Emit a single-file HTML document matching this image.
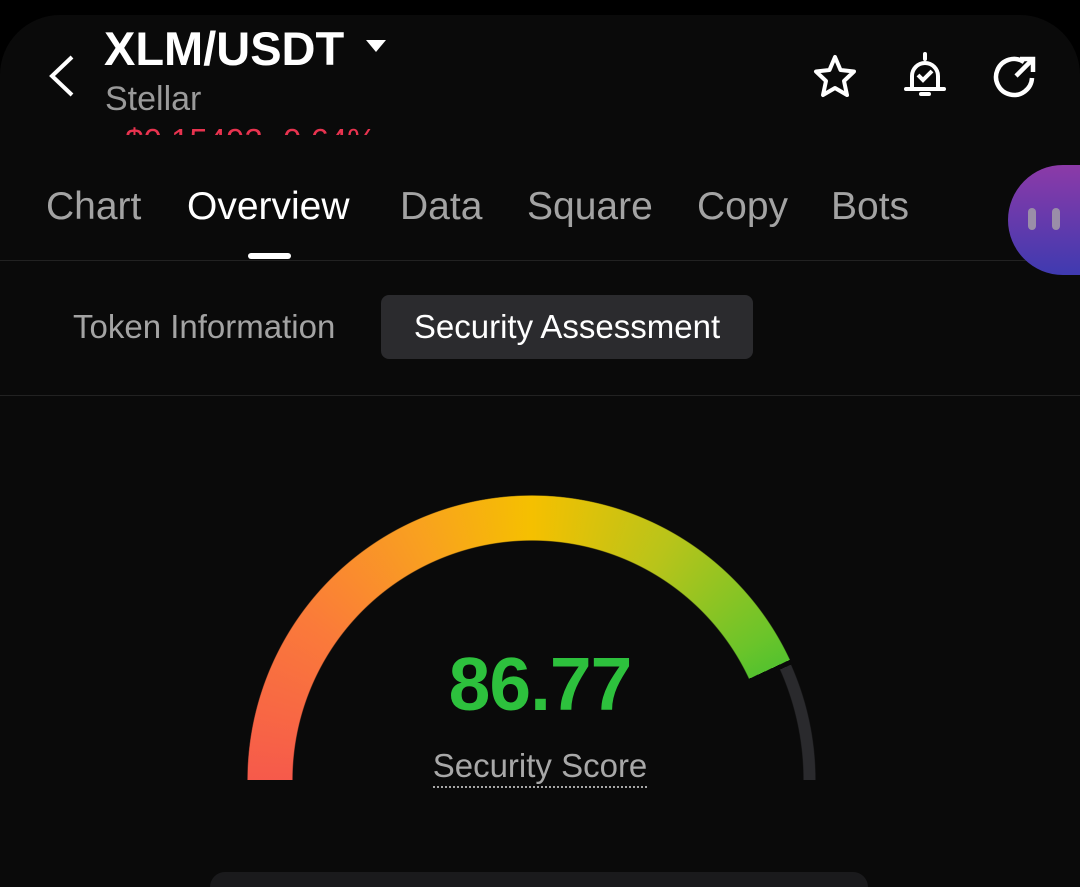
<!DOCTYPE html>
<html><head><meta charset="utf-8"><style>
*{margin:0;padding:0;box-sizing:border-box}
html,body{width:1080px;height:887px;overflow:hidden}
body{background:#000;font-family:"Liberation Sans",sans-serif;position:relative}
.panel{position:absolute;left:0;top:15px;width:1080px;height:872px;background:#0a0a0a;border-radius:60px 60px 0 0}
.abs{position:absolute;white-space:nowrap}
.tab{position:absolute;top:185px;font-size:39px;color:#a3a3a3}
.clip{position:absolute;left:247px;top:495px;width:570px;height:290px;overflow:hidden}
.gauge{position:absolute;left:0;top:0;width:570px;height:570px;border-radius:50%;
background:conic-gradient(from -90deg,#f65a4b 0deg,#fa7a3a 35deg,#f9a020 65deg,#f5c000 90deg,#b8c41a 120deg,#6cc42a 148deg,#55c22e 155deg,transparent 155deg);
-webkit-mask:radial-gradient(circle,transparent 239px,#000 240px,#000 284px,transparent 285px);}
.track{position:absolute;left:0;top:0;width:570px;height:570px;border-radius:50%;
background:conic-gradient(from 66deg,#2a2a2d 0deg,#2a2a2d 24deg,transparent 24deg);
-webkit-mask:radial-gradient(circle,transparent 271px,#000 272px,#000 283px,transparent 284px);}
</style></head><body>
<div class="panel"></div>
<svg class="abs" style="left:46px;top:54px" width="30" height="44"><path d="M26 3 L6 22 L26 41" fill="none" stroke="#fff" stroke-width="4"/></svg>
<div class="abs" style="left:104px;top:21px;font-size:47px;font-weight:bold;color:#fff">XLM/USDT</div>
<svg class="abs" style="left:366px;top:40px" width="20" height="14"><path d="M0 0H20L10 12Z" fill="#fff"/></svg>
<div class="abs" style="left:105px;top:80px;font-size:34px;color:#9a9a9a">Stellar</div>
<div class="abs" style="left:105px;top:118px;height:17px;overflow:hidden;"><div style="font-size:33px;color:#e8334f;margin-top:4px">- $0.15493 -0.64%</div></div>
<svg class="abs" style="left:810px;top:52px" width="50" height="50" viewBox="0 0 50 50"><path d="M25 5 L30.5 18 L44 19.5 L34 29 L37 43 L25 36 L13 43 L16 29 L6 19.5 L19.5 18 Z" fill="none" stroke="#fff" stroke-width="4" stroke-linejoin="round"/></svg>
<svg class="abs" style="left:900px;top:50px" width="50" height="50" viewBox="0 0 50 50"><path d="M12 38 V26 a13 13 0 0 1 26 0 V38 M6 39 H44 M21 44 h8 M25 4 v5" fill="none" stroke="#fff" stroke-width="4" stroke-linecap="round"/><path d="M18 25 l5 5 l9 -9" fill="none" stroke="#fff" stroke-width="4"/></svg>
<svg class="abs" style="left:990px;top:52px" width="50" height="50" viewBox="0 0 50 50"><path d="M34 10 A18 18 0 1 0 42 26" fill="none" stroke="#fff" stroke-width="4.5"/><path d="M26 24 L42 8 M30 7 H43 V20" fill="none" stroke="#fff" stroke-width="4.5"/></svg>
<div class="tab" style="left:46px">Chart</div>
<div class="tab" style="left:187px;color:#fff">Overview</div>
<div class="tab" style="left:400px">Data</div>
<div class="tab" style="left:527px">Square</div>
<div class="tab" style="left:697px">Copy</div>
<div class="tab" style="left:831px">Bots</div>
<div class="abs" style="left:248px;top:253px;width:43px;height:6px;border-radius:3px;background:#fff"></div>
<div class="abs" style="left:0;top:260px;width:1080px;height:1px;background:#222"></div>
<div class="abs" style="left:1008px;top:165px;width:72px;height:110px;border-radius:55px 0 0 55px;background:linear-gradient(#8c3aa8,#3f3ab0)"></div>
<div class="abs" style="left:1028px;top:208px;width:8px;height:22px;border-radius:4px;background:#9a8ea8"></div>
<div class="abs" style="left:1052px;top:208px;width:8px;height:22px;border-radius:4px;background:#9a8ea8"></div>
<div class="abs" style="left:73px;top:308px;font-size:33px;color:#a3a3a3">Token Information</div>
<div class="abs" style="left:381px;top:295px;width:372px;height:64px;border-radius:8px;background:#2b2b2e"></div>
<div class="abs" style="left:381px;top:308px;width:372px;text-align:center;font-size:33px;color:#fff">Security Assessment</div>
<div class="abs" style="left:0;top:395px;width:1080px;height:1px;background:#222"></div>
<div class="clip"><div class="gauge"></div><div class="track"></div></div>
<div class="abs" style="left:340px;width:400px;text-align:center;top:641px;font-size:75px;font-weight:bold;color:#2dc13d;letter-spacing:-1px">86.77</div>
<div class="abs" style="left:340px;width:400px;text-align:center;top:747px;font-size:33px;color:#a8a8a8"><span style="border-bottom:2px dotted #a8a8a8;padding-bottom:2px">Security Score</span></div>
<div class="abs" style="left:210px;top:872px;width:658px;height:15px;border-radius:16px 16px 0 0;background:#1a1a1c"></div>
</body></html>
